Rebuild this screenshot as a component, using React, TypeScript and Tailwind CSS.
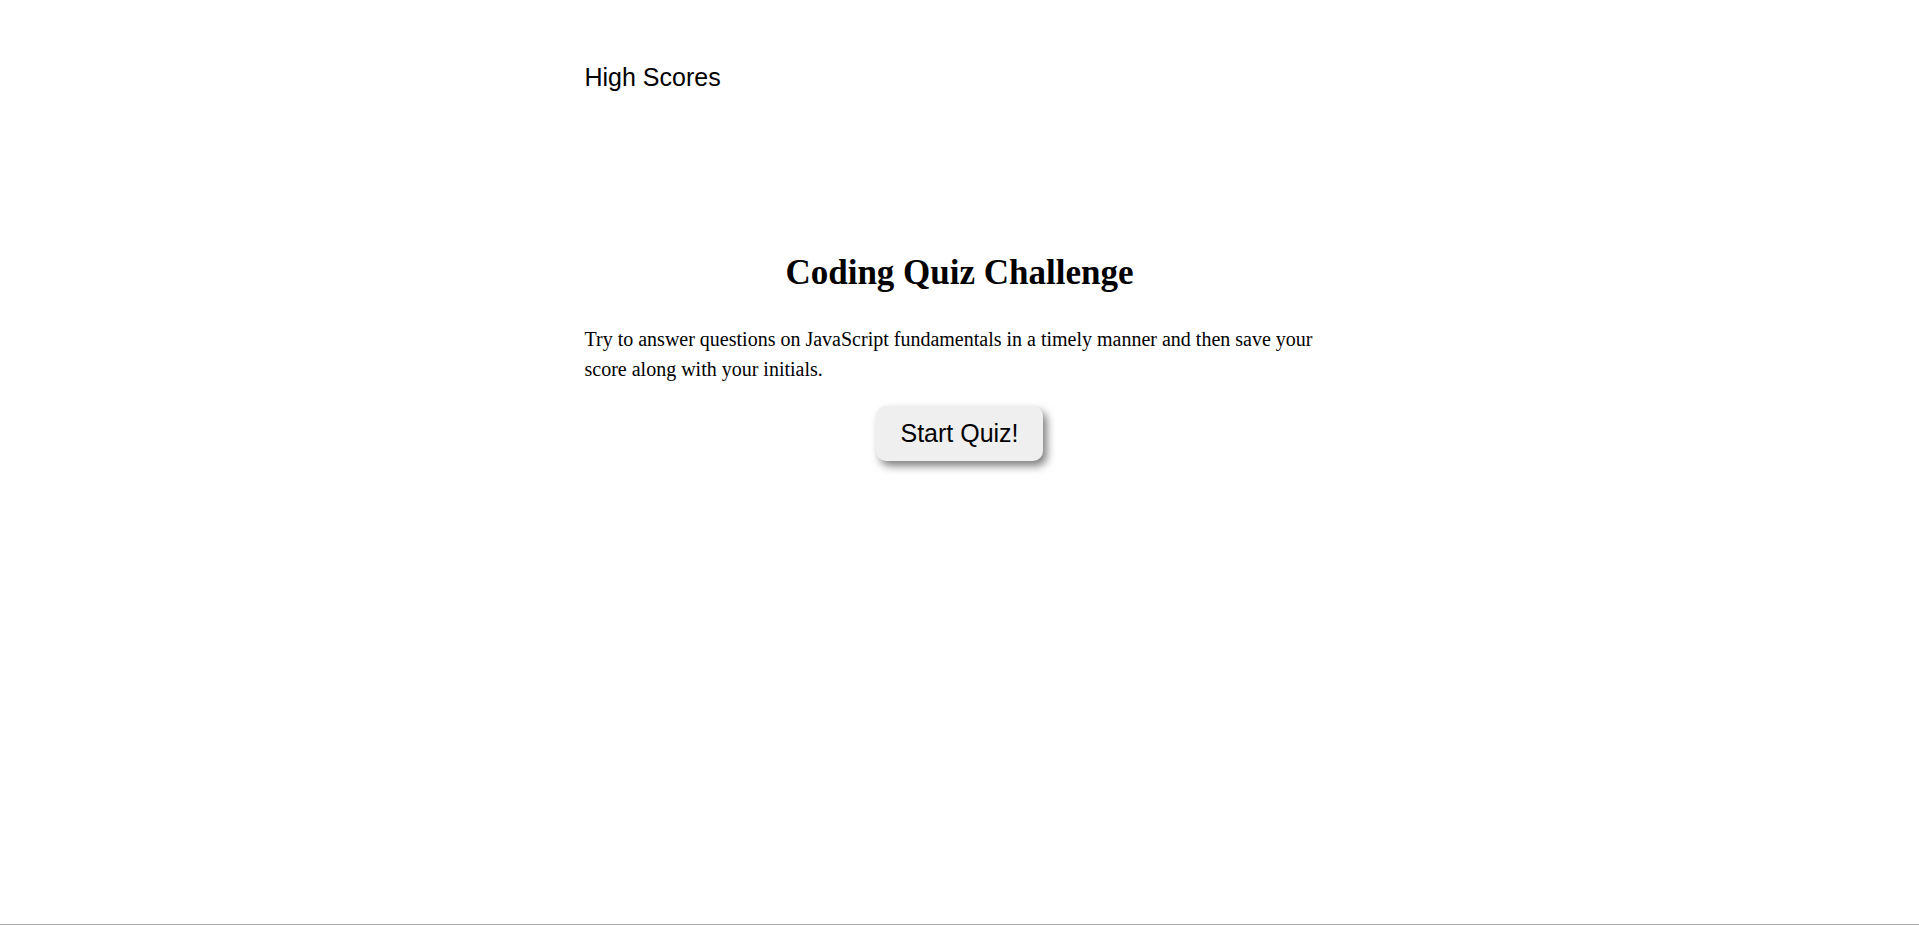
export default function App() {
  return (
    <div className="min-h-[925px] bg-white border-b border-[#aaaaaa] text-black">
      {/* Header */}
      <header className="w-[750px] mx-auto pt-[63px]">
        <a className="text-[25px] leading-[29px] font-['Liberation_Sans',Arial,sans-serif] cursor-pointer">
          High Scores
        </a>
      </header>

      {/* Intro */}
      <main className="w-[750px] mx-auto mt-[161px] font-['Liberation_Serif','Times_New_Roman',serif]">
        <h1 className="text-center text-[35px] leading-[40px] font-bold">Coding Quiz Challenge</h1>
        <p className="mt-[31px] text-[20px] leading-[30px]">
          Try to answer questions on JavaScript fundamentals in a timely manner and then save your score along
          with your initials.
        </p>
        <div className="flex justify-center mt-[22px]">
          <button className="px-[24px] py-[13px] bg-[#efefef] rounded-[10px] text-[25px] leading-[29px] font-['Liberation_Sans',Arial,sans-serif] shadow-[4px_5px_9px_rgba(0,0,0,0.5)]">
            Start Quiz!
          </button>
        </div>
      </main>
    </div>
  );
}
